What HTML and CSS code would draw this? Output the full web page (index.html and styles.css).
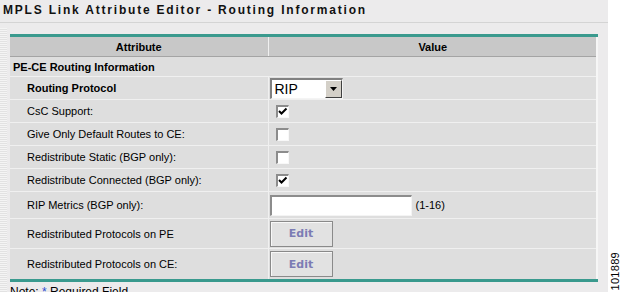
FILE: index.html
```html
<!DOCTYPE html>
<html lang="en">

<head>
    <meta charset="UTF-8">
    <meta name="viewport" content="width=device-width, initial-scale=1.0">
    <title>MPLS Link Attribute Editor</title>
    <link rel="stylesheet" href="styles.css">
</head>

<body>
    <div class="page">
        <div class="panel">
            <h1 class="title">MPLS Link Attribute Editor - Routing Information</h1>
            <div class="content">
                <div class="edge"></div>
                <div class="main">
                    <table class="attr">
                        <tr class="head">
                            <th>Attribute</th>
                            <th class="val">Value</th>
                        </tr>
                        <tr class="group">
                            <td colspan="2">PE-CE Routing Information</td>
                        </tr>
                        <tr class="r-select">
                            <td class="label strong">Routing Protocol</td>
                            <td class="val">
                                <div class="select">
                                    <span class="select-text">RIP</span>
                                    <span class="select-btn">
                                        <svg width="7" height="4" viewBox="0 0 7 4"><path d="M0 0h7L3.5 4z" fill="#000"/></svg>
                                    </span>
                                </div>
                            </td>
                        </tr>
                        <tr class="r-check">
                            <td class="label">CsC Support:</td>
                            <td class="val"><span class="check on"></span></td>
                        </tr>
                        <tr class="r-check">
                            <td class="label">Give Only Default Routes to CE:</td>
                            <td class="val"><span class="check"></span></td>
                        </tr>
                        <tr class="r-check">
                            <td class="label">Redistribute Static (BGP only):</td>
                            <td class="val"><span class="check"></span></td>
                        </tr>
                        <tr class="r-check">
                            <td class="label">Redistribute Connected (BGP only):</td>
                            <td class="val"><span class="check on"></span></td>
                        </tr>
                        <tr class="r-input">
                            <td class="label">RIP Metrics (BGP only):</td>
                            <td class="val"><span class="textbox"></span><span class="hint">(1-16)</span></td>
                        </tr>
                        <tr class="r-btn">
                            <td class="label">Redistributed Protocols on PE</td>
                            <td class="val"><span class="btn">Edit</span></td>
                        </tr>
                        <tr class="r-btn last">
                            <td class="label">Redistributed Protocols on CE:</td>
                            <td class="val"><span class="btn">Edit</span></td>
                        </tr>
                    </table>
                    <p class="note">Note: <span class="req">*</span> Required Field</p>
                </div>
            </div>
        </div>
        <div class="side"><span class="figno">101889</span></div>
    </div>
</body>

</html>
```

FILE: styles.css
```css
* {
    margin: 0;
    padding: 0;
    box-sizing: border-box;
}

body {
    background-color: #ffffff;
    font-family: "Liberation Sans", Arial, sans-serif;
    font-size: 11px;
    color: #000;
}

.page {
    display: flex;
    width: 621px;
    height: 292px;
    overflow: hidden;
}

.panel {
    width: 608px;
    background-color: #ecebec;
}

.title {
    height: 23px;
    padding: 3px 0 0 3px;
    font-size: 12px;
    font-weight: bold;
    letter-spacing: 1.8px;
    color: #111;
    border-bottom: 1px solid #d4d4d4;
}

.content {
    display: flex;
}

.edge {
    width: 7px;
    margin-top: 5px;
    height: 270px;
    background: repeating-linear-gradient(180deg, #f4f4f4 0 1px, #e2e2e2 1px 2px);
}

.main {
    padding: 11px 0 0 3px;
}

.attr {
    width: 588px;
    border-collapse: collapse;
    background-color: #dedede;
    border-top: 3px solid #3a9a8e;
    border-bottom: 3px solid #3a9a8e;
    border-right: 2px solid #f6f6f6;
}

.attr th {
    height: 21px;
    background-color: #c8c8c8;
    border-bottom: 1px solid #a4a4a4;
    font-size: 11px;
    font-weight: bold;
    text-align: center;
}

.attr td {
    border-bottom: 1px solid #f0f0f0;
    vertical-align: middle;
}

.attr .val {
    width: 329px;
    border-left: 1px solid #f0f0f0;
    padding-left: 1px;
}

.group td {
    height: 20px;
    padding-left: 3px;
    font-weight: bold;
}

.label {
    padding-left: 17px;
}

.strong {
    font-weight: bold;
}

.r-select td {
    height: 23px;
}

.r-check td {
    height: 23px;
}

.r-input td {
    height: 27px;
}

.r-btn td {
    height: 30px;
}

.last td {
    height: 32px;
    border-bottom: none;
}

.select {
    display: flex;
    width: 73px;
    height: 21px;
    background-color: #fff;
    border-top: 2px solid #808080;
    border-left: 2px solid #808080;
    border-right: 1px solid #f4f4f4;
    border-bottom: 1px solid #f4f4f4;
}

.select-text {
    flex: 1;
    padding: 1px 0 0 3px;
    font-size: 14px;
    line-height: 16px;
}

.select-btn {
    width: 17px;
    display: flex;
    align-items: center;
    justify-content: center;
    background-color: #d4d0c8;
    border-top: 1px solid #fff;
    border-left: 1px solid #fff;
    border-right: 1px solid #404040;
    border-bottom: 1px solid #404040;
}

.check {
    display: block;
    width: 13px;
    height: 13px;
    margin-left: 6px;
    background-color: #fff;
    border-top: 2px solid #8c8c8c;
    border-left: 2px solid #8c8c8c;
    border-right: 1px solid #f8f8f8;
    border-bottom: 1px solid #f8f8f8;
}

.check.on {
    background: #fff url("data:image/svg+xml;utf8,<svg xmlns='http://www.w3.org/2000/svg' width='10' height='10'><path d='M1 4l2.5 2.5L8.5 1.5' stroke='black' stroke-width='2' fill='none'/></svg>") no-repeat 0 0;
}

.textbox {
    display: inline-block;
    vertical-align: middle;
    width: 142px;
    height: 21px;
    background-color: #fff;
    border-top: 2px solid #8c8c8c;
    border-left: 2px solid #8c8c8c;
    border-right: 1px solid #f4f4f4;
    border-bottom: 1px solid #f4f4f4;
}

.hint {
    vertical-align: middle;
    margin-left: 4px;
}

.btn {
    display: flex;
    align-items: center;
    justify-content: center;
    width: 63px;
    height: 26px;
    background-color: #e2e2e2;
    border: 1px solid #8a8a8a;
    box-shadow: inset 1px 1px 0 #f8f8f8;
    color: #7c7cb4;
    font-family: "DejaVu Sans", Verdana, sans-serif;
    font-size: 11px;
    font-weight: bold;
}

.note {
    margin-top: 3px;
    font-size: 12px;
}

.req {
    color: #2c4bd0;
}

.side {
    flex: 1;
    display: flex;
    align-items: flex-end;
    justify-content: center;
    padding-bottom: 1px;
}

.figno {
    writing-mode: vertical-rl;
    transform: rotate(180deg);
    font-size: 11px;
    letter-spacing: 0.3px;
    color: #000;
}
```
